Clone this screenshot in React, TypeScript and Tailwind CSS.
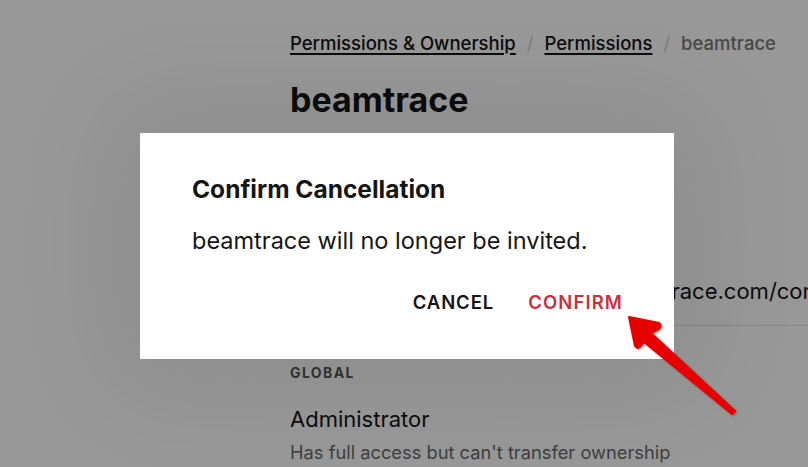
import { ReactNode } from 'react';

const font = { fontFamily: 'Inter, "Noto Sans", sans-serif' };

function Crumb({ children }: { children: ReactNode }) {
  return (
    <a className="text-[18.5px] font-medium text-[#151515] underline underline-offset-[3px] decoration-[1.5px]">
      {children}
    </a>
  );
}

function Arrow() {
  return (
    <svg
      className="absolute left-0 top-0 pointer-events-none"
      width="808"
      height="467"
      viewBox="0 0 808 467"
    >
      <defs>
        <filter id="sh" x="-20%" y="-20%" width="140%" height="140%">
          <feDropShadow dx="1" dy="1" stdDeviation="1" floodColor="#000" floodOpacity="0.35" />
        </filter>
      </defs>
      <path
        d="M629 317 L659 323 Q662 326 659 329 L651 333 L735 411 L732 414 L644 342 L641 346 Q638 350 635 346 Z"
        fill="#e60000"
        stroke="#e60000"
        strokeWidth="2"
        strokeLinejoin="round"
        filter="url(#sh)"
      />
    </svg>
  );
}

export default function App() {
  return (
    <div className="relative w-[808px] h-[467px] overflow-hidden bg-white" style={font}>
      {/* page behind the dialog */}
      <div className="pl-[290px] pt-[30px]">
        <div className="flex items-center gap-[11px] text-[18.5px]">
          <Crumb>Permissions &amp; Ownership</Crumb>
          <span className="text-[#d0d0d0]">/</span>
          <Crumb>Permissions</Crumb>
          <span className="text-[#d0d0d0]">/</span>
          <span className="font-medium text-[#7a7a7a]">beamtrace</span>
        </div>
        <h1 className="mt-[22px] text-[34px] font-bold text-[#151515] leading-[40px]">beamtrace</h1>
        <div className="mt-[157px] flex text-[22px] text-[#151515] whitespace-nowrap leading-[28px]">
          <span className="w-[242px] shrink-0">Login URL</span>
          <span>https://beamtrace.com/connect</span>
        </div>
        <div className="mt-[20px] h-px bg-[#e2e2e2]" />
        <div className="mt-[40px] text-[14px] font-bold tracking-[0.1em] text-[#555] leading-none">
          GLOBAL
        </div>
        <div className="mt-[28px] text-[22px] text-[#151515] leading-none">Administrator</div>
        <div className="mt-[13px] text-[18.3px] text-[#6a6a6a] leading-none">
          Has full access but can't transfer ownership
        </div>
      </div>

      {/* overlay */}
      <div className="absolute inset-0 bg-black/40" />

      {/* dialog */}
      <div className="absolute left-[140px] top-[133px] w-[534px] h-[226px] bg-white shadow-[0_0_120px_40px_rgba(0,0,0,0.08)] px-[52px] pt-[41px]">
        <h2 className="text-[24.5px] font-bold text-[#151515] leading-[30px]">Confirm Cancellation</h2>
        <p className="mt-[22px] text-[23.5px] text-[#151515] leading-[30px]">
          beamtrace will no longer be invited.
        </p>
        <div className="mt-[37px] flex justify-end gap-[34px] -mr-[1px]">
          <button className="text-[18.5px] font-semibold tracking-[0.05em] text-[#151515] leading-none">
            CANCEL
          </button>
          <button className="text-[18.5px] font-semibold tracking-[0.06em] text-[#c9303c] leading-none">
            CONFIRM
          </button>
        </div>
      </div>

      <Arrow />
    </div>
  );
}
